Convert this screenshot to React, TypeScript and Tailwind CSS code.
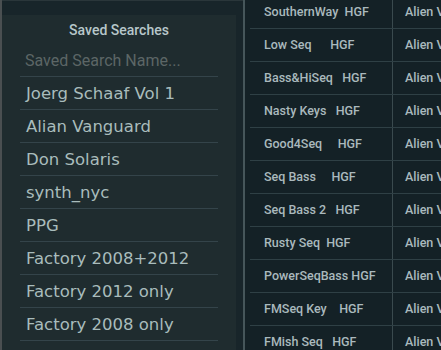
const savedSearches = [
  'Joerg Schaaf Vol 1',
  'Alian Vanguard',
  'Don Solaris',
  'synth_nyc',
  'PPG',
  'Factory 2008+2012',
  'Factory 2012 only',
  'Factory 2008 only',
]

const patches = [
  'SouthernWay  HGF',
  'Low Seq      HGF',
  'Bass&HiSeq   HGF',
  'Nasty Keys   HGF',
  'Good4Seq     HGF',
  'Seq Bass     HGF',
  'Seq Bass 2   HGF',
  'Rusty Seq  HGF',
  'PowerSeqBass HGF',
  'FMSeq Key    HGF',
  'FMish Seq   HGF',
]

export default function App() {
  return (
    <div className="w-[441px] h-[350px] flex overflow-hidden bg-[#142126]">
      {/* Saved searches panel */}
      <div className="w-[243px] shrink-0 flex">
        <div className="w-[2px] bg-[#4a4f51]" />
        <div className="flex-1 flex flex-col">
          <div className="h-[15px] bg-[#18252a] border-t border-[#2a363a]" />
          <div className="flex-1 flex">
            <div
              className="w-[234px] bg-[#1f2c2f] flex flex-col"
              style={{ fontFamily: 'Roboto, sans-serif' }}
            >
              <div className="h-[30px] flex items-center justify-center text-[14px] font-medium text-[#b7c7ca]">
                Saved Searches
              </div>
              <div className="mx-[18px] h-[32px] flex items-center px-[5px] border-b border-[#34444a] text-[16px] text-[#5c6666]">
                Saved Search Name...
              </div>
              <ul style={{ fontFamily: '"DejaVu Sans", sans-serif' }}>
                {savedSearches.map((name) => (
                  <li
                    key={name}
                    className="mx-[18px] h-[33px] flex items-center pl-[6px] pt-[2px] border-b border-[#34444a] text-[16.5px] text-[#a9bcbc]"
                  >
                    {name}
                  </li>
                ))}
              </ul>
            </div>
            <div className="flex-1 bg-[#18252a]" />
          </div>
        </div>
      </div>

      <div className="w-[2px] shrink-0 bg-[#46565a]" />

      {/* Patch list */}
      <div
        className="flex-1 overflow-hidden -mt-[4px]"
        style={{ fontFamily: 'Roboto, sans-serif' }}
      >
        {patches.map((name) => (
          <div
            key={name}
            className="ml-[5px] h-[33px] flex border-b border-[#2f4045] text-[12.5px] font-medium text-[#aab9bd]"
          >
            <div className="w-[143px] shrink-0 flex items-center pl-[14px] border-r border-[#3a4a4e] whitespace-pre">
              {name}
            </div>
            <div className="flex-1 flex items-center pl-[12px] whitespace-nowrap overflow-hidden">
              Alien Vanguard
            </div>
          </div>
        ))}
      </div>
    </div>
  )
}
